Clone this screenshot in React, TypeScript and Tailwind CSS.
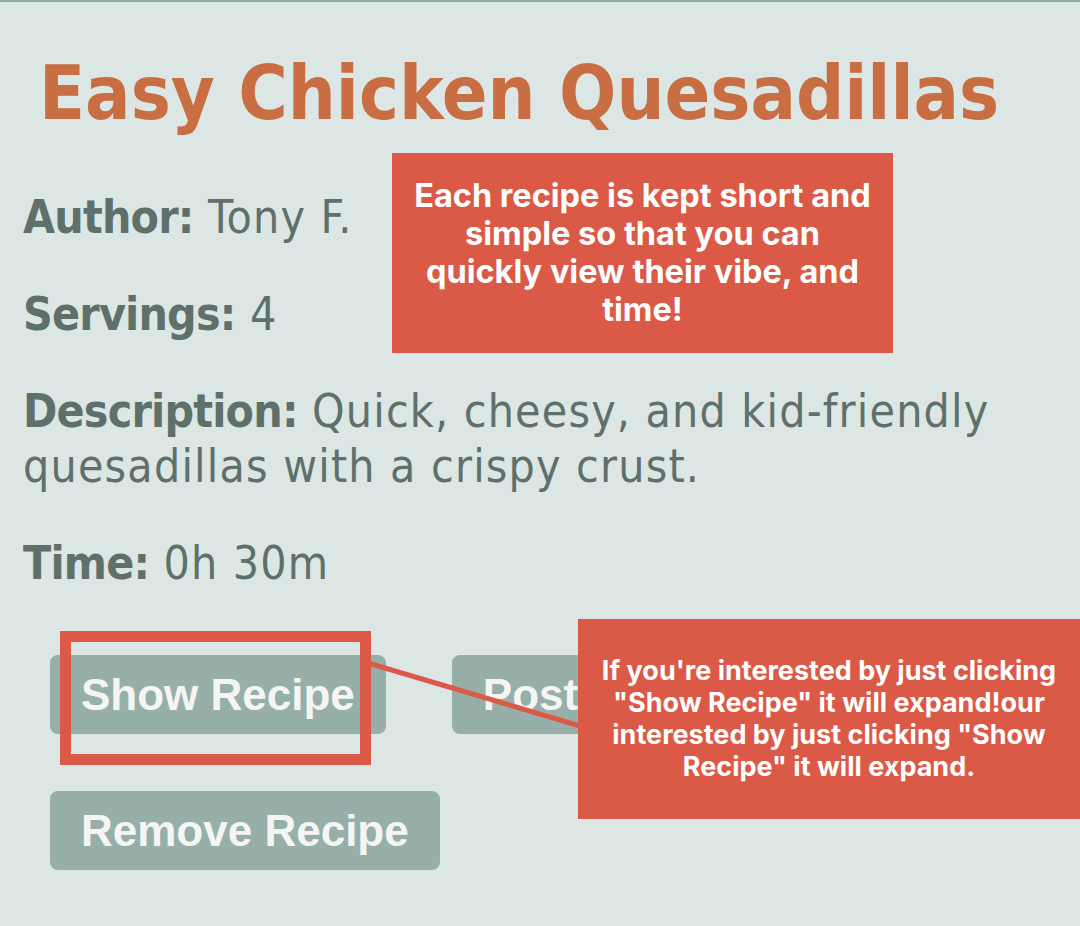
import React from "react";

const bodyFont = "font-['DejaVu_Sans_Condensed','DejaVu_Sans',sans-serif]";

function Field({ label, value }: { label: string; value: string }) {
  return (
    <p className={`${bodyFont} text-[46px] leading-[55px] text-[#5f706b] tracking-[1.2px]`}>
      <span className="font-bold tracking-[-0.8px]">{label}</span> {value}
    </p>
  );
}

function RecipeButton({ children }: { children: React.ReactNode }) {
  return (
    <button className="h-[79px] px-[31px] rounded-[8px] bg-[#96b0a9] text-[#f5f5f5] font-['Liberation_Sans',Arial,sans-serif] font-bold text-[44px] leading-none whitespace-nowrap">
      {children}
    </button>
  );
}

function Callout({ className, textClass, children }: { className: string; textClass: string; children: React.ReactNode }) {
  return (
    <div
      className={`absolute flex items-center justify-center bg-[#db5a47] text-white text-center font-['Inter',sans-serif] font-bold ${className}`}
    >
      <p className={textClass}>{children}</p>
    </div>
  );
}

export default function App() {
  return (
    <div className="relative min-h-screen w-full overflow-hidden bg-[#dce6e4] border-t-2 border-[#8fa8a2]">
      <div className="px-[23px] pt-[46px]">
        <h1 className={`${bodyFont} ml-[16px] text-[75px] leading-[90px] font-bold text-[#c96d42] whitespace-nowrap`}>
          Easy Chicken Quesadillas
        </h1>

        <div className="mt-[52px] flex flex-col gap-[42px]">
          <Field label="Author:" value="Tony F." />
          <Field label="Servings:" value="4" />
          <Field label="Description:" value="Quick, cheesy, and kid‑friendly quesadillas with a crispy crust." />
          <Field label="Time:" value="0h 30m" />
        </div>

        <div className="mt-[64px] ml-[27px] flex flex-col gap-[57px] pb-[50px]">
          <div className="flex gap-[66px]">
            <RecipeButton>Show Recipe</RecipeButton>
            <RecipeButton>Post Recipe</RecipeButton>
          </div>
          <div className="flex">
            <RecipeButton>Remove Recipe</RecipeButton>
          </div>
        </div>
      </div>

      {/* annotation overlays */}
      <Callout className="left-[392px] top-[151px] w-[501px] h-[200px] px-[18px]" textClass="text-[32.5px] leading-[38px]">
        Each recipe is kept short and simple so that you can quickly view their vibe, and time!
      </Callout>

      <div className="absolute left-[60px] top-[629px] w-[311px] h-[134px] border-[11px] border-[#db5a47]" />

      <svg className="absolute left-0 top-0 pointer-events-none" width="1080" height="926">
        <line x1="368" y1="661" x2="580" y2="724" stroke="#db5a47" strokeWidth="5" />
      </svg>

      <Callout className="left-[578px] top-[617px] w-[502px] h-[200px] px-[20px]" textClass="text-[27px] leading-[32px]">
        If you're interested by just clicking "Show Recipe" it will expand!our interested by just clicking "Show Recipe" it will expand.
      </Callout>
    </div>
  );
}
